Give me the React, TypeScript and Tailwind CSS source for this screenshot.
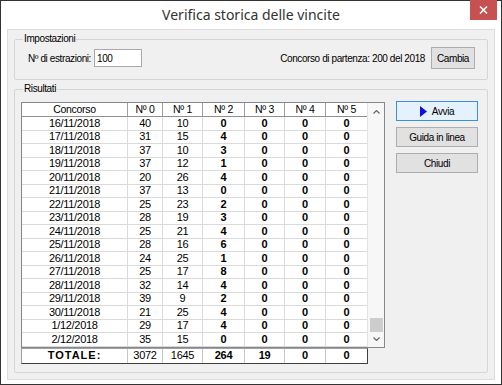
import React from "react";

const rows: [string, number, number, number, number, number, number][] = [
  ["16/11/2018", 40, 10, 0, 0, 0, 0],
  ["17/11/2018", 31, 15, 4, 0, 0, 0],
  ["18/11/2018", 37, 10, 3, 0, 0, 0],
  ["19/11/2018", 37, 12, 1, 0, 0, 0],
  ["20/11/2018", 20, 26, 4, 0, 0, 0],
  ["21/11/2018", 37, 13, 0, 0, 0, 0],
  ["22/11/2018", 25, 23, 2, 0, 0, 0],
  ["23/11/2018", 28, 19, 3, 0, 0, 0],
  ["24/11/2018", 25, 21, 4, 0, 0, 0],
  ["25/11/2018", 28, 16, 6, 0, 0, 0],
  ["26/11/2018", 24, 25, 1, 0, 0, 0],
  ["27/11/2018", 25, 17, 8, 0, 0, 0],
  ["28/11/2018", 32, 14, 4, 0, 0, 0],
  ["29/11/2018", 39, 9, 2, 0, 0, 0],
  ["30/11/2018", 21, 25, 4, 0, 0, 0],
  ["1/12/2018", 29, 17, 4, 0, 0, 0],
  ["2/12/2018", 35, 15, 0, 0, 0, 0],
];

const cols = "grid grid-cols-[106px_35px_40px_42px_40px_41px_41px]";

export default function App() {
  return (
    <div
      className="w-[502px] h-[385px] bg-white border border-[#333333] flex flex-col px-[6px] pb-[6px] text-[10px] tracking-[-0.4px] text-black"
      style={{ fontFamily: '"Liberation Sans", Arial, sans-serif' }}
    >
      {/* Title bar */}
      <div className="relative h-[28px] shrink-0 flex items-center justify-center">
        <span
          className="text-[14px] tracking-normal text-[#333333] leading-none"
          style={{ fontFamily: '"Noto Sans", "Open Sans", sans-serif' }}
        >
          Verifica storica delle vincite
        </span>
        <div className="absolute top-[-1px] right-[-2px] w-[27px] h-[20px] bg-[#c75050] flex items-center justify-center">
          <svg width="9" height="8" viewBox="0 0 9 8">
            <path d="M1 0.5 L8 7.5 M8 0.5 L1 7.5" stroke="white" strokeWidth="1.6" />
          </svg>
        </div>
      </div>

      {/* Client area */}
      <div className="flex-1 bg-[#f0f0f0] border border-[#dcdcdc] flex flex-col px-[6px] pt-[3px] pb-[6px]">
        {/* Impostazioni */}
        <fieldset className="border border-[#d5d5d5] rounded-[2px] px-[13px] pb-[10px] pt-0 h-[47px]">
          <legend className="px-[1px] ml-[-5px] leading-[12px]">Impostazioni</legend>
          <div className="flex items-center h-[22px] mt-[2px]">
            <span>Nº di estrazioni:</span>
            <div className="ml-[3px] w-[48px] h-[18px] bg-white border border-[#a9a9a9] flex items-center pl-[2px]">
              100
            </div>
            <span className="ml-auto mr-[6px]">Concorso di partenza: 200 del 2018</span>
            <div className="w-[44px] h-[22px] bg-[#e1e1e1] border border-[#adadad] flex items-center justify-center mr-[-1px]">
              Cambia
            </div>
          </div>
        </fieldset>

        {/* Risultati */}
        <fieldset className="mt-[3px] flex-1 border border-[#d5d5d5] rounded-[2px] pl-[6px] pr-[9px] pt-[0px] pb-[8px] flex">
          <legend className="px-[1px] ml-[2px] leading-[12px]">Risultati</legend>
          <div className="flex gap-[11px] items-start mt-[7px]">
            <div className="flex flex-col text-[11px] tracking-[-0.3px]">
              <div className="flex border border-[#828790] bg-white">
                <div className="flex flex-col w-[345px]">
                  {/* header */}
                  <div className={`${cols} h-[14px] border-b border-[#8f8f8f]`}>
                    {["Concorso", "Nº 0", "Nº 1", "Nº 2", "Nº 3", "Nº 4", "Nº 5"].map((h, i) => (
                      <div
                        key={h}
                        className={`flex items-center justify-center leading-none bg-white text-[10.5px] ${
                          i < 6 ? "border-r border-[#a0a0a0]" : ""
                        }`}
                      >
                        {h}
                      </div>
                    ))}
                  </div>
                  {rows.map((r) => (
                    <div key={r[0]} className={`${cols} h-[13.5px]`}>
                      {r.map((v, i) => (
                        <div
                          key={i}
                          className={`flex items-center justify-center leading-none border-b border-[#dadada] ${
                            i < 6 ? "border-r" : ""
                          } ${i >= 3 ? "font-bold" : ""}`}
                        >
                          {v}
                        </div>
                      ))}
                    </div>
                  ))}
                </div>
                {/* scrollbar */}
                <div className="w-[17px] bg-[#f7f7f7] border-l border-[#e3e3e3] flex flex-col items-center">
                  <div className="h-[17px] flex items-center justify-center">
                    <svg width="7" height="4" viewBox="0 0 7 4">
                      <path d="M0.5 3.5 L3.5 0.5 L6.5 3.5" stroke="#606060" fill="none" strokeWidth="1.1" />
                    </svg>
                  </div>
                  <div className="flex-1" />
                  <div className="w-[13px] h-[14px] bg-[#cdcdcd]" />
                  <div className="h-[15px] flex items-center justify-center">
                    <svg width="7" height="4" viewBox="0 0 7 4">
                      <path d="M0.5 0.5 L3.5 3.5 L6.5 0.5" stroke="#606060" fill="none" strokeWidth="1.1" />
                    </svg>
                  </div>
                </div>
              </div>
              {/* totals */}
              <div
                className={`${cols} w-[347px] h-[16px] bg-white border border-t-[#a0a0a0] border-l-[#a0a0a0] border-r-[#404040] border-b-[#404040]`}
              >
                {[
                  ["TOTALE:", true],
                  ["3072", false],
                  ["1645", false],
                  ["264", true],
                  ["19", true],
                  ["0", true],
                  ["0", true],
                ].map(([v, b], i) => (
                  <div
                    key={i}
                    className={`flex items-center justify-center leading-none ${
                      i < 6 ? "border-r border-[#c8c8c8]" : ""
                    } ${b ? "font-bold" : "font-normal"} ${i === 0 ? "tracking-[1px]" : ""}`}
                  >
                    {v as string}
                  </div>
                ))}
              </div>
            </div>

            {/* Buttons */}
            <div className="flex flex-col gap-[6px] w-[82px] mt-[-1px]">
              <div className="h-[20px] border border-[#3c8fe0] bg-[#e5f1fb] flex items-center justify-center gap-[5px]">
                <svg width="7" height="11" viewBox="0 0 7 11">
                  <path d="M0 0 L7 5.5 L0 11 Z" fill="#1010e0" />
                </svg>
                <span>Avvia</span>
              </div>
              <div className="h-[20px] border border-[#adadad] bg-[#e1e1e1] flex items-center justify-center">
                Guida in linea
              </div>
              <div className="h-[20px] border border-[#adadad] bg-[#e1e1e1] flex items-center justify-center">
                Chiudi
              </div>
            </div>
          </div>
        </fieldset>
      </div>
    </div>
  );
}
